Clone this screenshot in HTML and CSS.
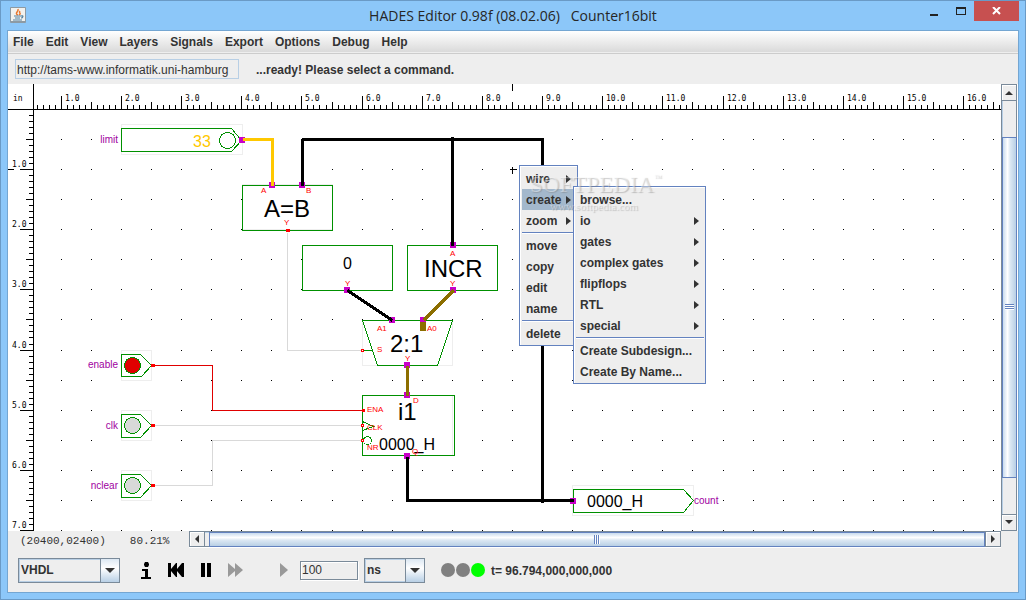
FILE: index.html
```html
<!DOCTYPE html>
<html lang="en">
<head>
  <meta charset="UTF-8" />
  <meta name="viewport" content="width=device-width, initial-scale=1.0"/>
  <title>HADES Editor</title>
  <link rel="stylesheet" href="styles.css">
</head>
<body>

<div class="window">

  <header class="titlebar">
    <svg class="app-icon" width="16" height="16" viewBox="0 0 16 16">
      <rect x="0" y="0" width="16" height="16" rx="1" fill="#8d9aa3"/>
      <rect x="1" y="1" width="14" height="13" fill="#f1f1ee"/>
      <path d="M8 8C4 6 9 5 8 2M9 8c3-2-1-2 1-4" fill="none" stroke="#e8772e" stroke-width="1.5"/>
      <path d="M4 9h7M5 11h5M3 13h9M11 9c3-1 2 2 0 2" fill="none" stroke="#5382a1" stroke-width="1.2"/>
    </svg>
    <h1>HADES Editor 0.98f (08.02.06)   Counter16bit</h1>
    <div class="window-buttons">
      <button class="win-btn" aria-label="Minimize"><svg width="11" height="9"><rect x="2" y="7" width="8" height="2" fill="#222"/></svg></button>
      <button class="win-btn" aria-label="Maximize"><svg width="11" height="9"><path d="M1 0h10v8H1zM2 2v5h8V2z" fill="#222" fill-rule="evenodd"/></svg></button>
      <button class="win-btn close" aria-label="Close"><svg width="9" height="8"><path d="M1 0l7 7M8 0l-7 7" stroke="#fff" stroke-width="2"/></svg></button>
    </div>
  </header>

  <div class="client">

    <nav class="menubar">
      <button>File</button>
      <button>Edit</button>
      <button>View</button>
      <button>Layers</button>
      <button>Signals</button>
      <button>Export</button>
      <button>Options</button>
      <button>Debug</button>
      <button>Help</button>
    </nav>

    <div class="toolbar">
      <input class="url" type="text" aria-label="Design URL" value="http://tams-www.informatik.uni-hamburg" readonly>
      <span class="message">...ready! Please select a command.</span>
    </div>

    <main class="editor">
      <div class="canvas">
        <svg class="schematic" width="100%" height="100%">
          <g id="grid" class="crisp"></g>

          <!-- page coordinates, shifted to the canvas origin -->
          <g transform="translate(-7.5 -83.5)">

            <!-- bounding boxes -->
            <g class="bbox crisp">
              <rect x="121" y="124" width="121" height="30"/>
              <rect x="121" y="350" width="30" height="30"/>
              <rect x="121" y="410" width="30" height="30"/>
              <rect x="121" y="470" width="30" height="30"/>
              <rect x="242" y="184" width="90" height="45"/>
              <rect x="302" y="245" width="90" height="45"/>
              <rect x="407" y="245" width="90" height="45"/>
              <rect x="362" y="320" width="90" height="45"/>
              <rect x="362" y="395" width="90" height="60"/>
              <rect x="572" y="485" width="121" height="30"/>
            </g>

            <!-- component outlines -->
            <g class="outline crisp">
              <path d="M231 128H121V151H231L241 140Z"/>
              <circle cx="227" cy="140" r="8"/>
              <rect x="242" y="185" width="90" height="45"/>
              <rect x="302" y="245" width="90" height="45"/>
              <rect x="407" y="245" width="90" height="45"/>
              <path d="M362 320H452L437 365H377Z"/>
              <path d="M363 350H372"/>
              <rect x="362" y="395" width="92" height="60"/>
              <path d="M362 421L373 426L362 430"/>
              <circle cx="367" cy="440" r="4"/>
              <path d="M121 354H140L151 365L141 376H121Z"/>
              <path d="M121 414H140L151 425L140 437H121Z"/>
              <path d="M121 474H140L151 485L140 497H121Z"/>
              <circle cx="132" cy="365" r="8" fill="#e00000"/>
              <circle cx="132" cy="425" r="8" fill="#d9d9d9"/>
              <circle cx="132" cy="485" r="8" fill="#d9d9d9"/>
              <path d="M573 489H683L693 500L683 512H573Z"/>
            </g>
          </g>

          <!-- magenta bus pins -->
          <g class="pin crisp" transform="translate(-8 -84)">
            <path d="M242 137v6M272 182v6M302 182v6M347 287v6M453 242v6M453 287v6M392 317v6M423 317v6M407 362v6M407 392v6M407 453v6M573 498v6"/>
          </g>

          <g transform="translate(-7.5 -83.5)">
            <!-- wires -->
            <g class="wire crisp">
              <path class="low" d="M287 232V350H361M153 425H361M153 485H212V440H361"/>
              <path class="high" d="M153 365H212V410H361"/>
              <path class="bus yellow" d="M242 139H272V185"/>
              <path class="bus" d="M302 185V138M301 139H542V500M452 139V245M407 456V501M406 500H573"/>
              <path class="bus" d="M347 290L392 320"/>
              <path class="bus brown" d="M453 290L423 320M407 365V395"/>
              <circle cx="452" cy="139" r="2"/>
              <circle cx="542" cy="500" r="2"/>
            </g>

            <!-- signal pins -->
            <g class="port crisp">
              <path d="M285 230h4M150 365h4M150 425h4M150 485h4M361 410h3"/>
              <path class="open" d="M361 349h2v2h-2zM361 424h2v2h-2zM361 439h2v2h-2z"/>
            </g>

            <path class="cursor crisp" d="M509 169h7M512 166v7M512 83v7M7 169h6"/>
          </g>

          <rect class="stub crisp" x="412" y="238" width="6" height="9"/>

          <g transform="translate(-8 -84)">
            <g class="type">
              <text x="264" y="217">A=B</text>
              <text x="424" y="277">INCR</text>
              <text x="390" y="352">2:1</text>
              <text x="398" y="420">i1</text>
            </g>
            <g class="value">
              <text class="yellow" x="193" y="147">33</text>
              <text x="343" y="269">0</text>
              <text x="379" y="450">0000_H</text>
              <text x="587" y="507">0000_H</text>
            </g>
            <g class="label">
              <text x="118" y="143">limit</text>
              <text x="118" y="368">enable</text>
              <text x="118" y="429">clk</text>
              <text x="118" y="489">nclear</text>
              <text class="start" x="694" y="504">count</text>
            </g>
            <g class="port-name">
              <text x="261" y="193">A</text>
              <text x="306" y="193">B</text>
              <text x="284" y="225">Y</text>
              <text x="345" y="286">Y</text>
              <text x="450" y="256">A</text>
              <text x="450" y="286">Y</text>
              <text x="377" y="331">A1</text>
              <text x="427" y="331">A0</text>
              <text x="377" y="352">S</text>
              <text x="405" y="361">Y</text>
              <text x="413" y="403">D</text>
              <text x="367" y="412">ENA</text>
              <text x="367" y="430">CLK</text>
              <text x="367" y="450">NR</text>
              <text x="412" y="454">Q</text>
            </g>
          </g>

          <g id="rulers" class="crisp"></g>
        </svg>

        <div class="popup context">
          <button class="sub">wire</button>
          <button class="sub active">create</button>
          <button class="sub">zoom</button>
          <hr>
          <button>move</button>
          <button>copy</button>
          <button>edit</button>
          <button>name</button>
          <hr>
          <button>delete</button>
        </div>

        <div class="popup create">
          <button>browse...</button>
          <button class="sub">io</button>
          <button class="sub">gates</button>
          <button class="sub">complex gates</button>
          <button class="sub">flipflops</button>
          <button class="sub">RTL</button>
          <button class="sub">special</button>
          <hr>
          <button>Create Subdesign...</button>
          <button>Create By Name...</button>
        </div>

        <div class="watermark">
          <div class="brand">SOFTPEDIA<sup>™</sup></div>
          <div class="site">www.softpedia.com</div>
        </div>
      </div>

      <div class="scrollbar vertical">
        <button class="arrow up" aria-label="Scroll up"></button>
        <div class="track"></div>
        <div class="thumb"><span class="grip"></span></div>
        <div class="track"></div>
        <button class="arrow down" aria-label="Scroll down"></button>
      </div>
    </main>

    <div class="statusbar">
      <div class="info"><span>(20400,02400)</span><span>80.21%</span></div>
      <div class="scrollbar horizontal">
        <button class="arrow left" aria-label="Scroll left"></button>
        <div class="track"></div>
        <div class="thumb"><span class="grip"></span></div>
        <button class="arrow right" aria-label="Scroll right"></button>
      </div>
    </div>

    <footer class="simbar">
      <div class="combo language">
        <select aria-label="Language"><option>VHDL</option></select>
        <span class="drop"></span>
      </div>
      <div class="controls">
        <button aria-label="Info"><svg width="10" height="17"><path d="M3 2l1-2h3l1 2v1L7 5H4L3 3zM1 7h6v8h3v2H0v-2h4V9H1z" fill="#000"/></svg></button>
        <button aria-label="Rewind"><svg width="16" height="14"><path d="M0 0h3v6l5-6h1v6l5-6h2v14h-2L9 8v6H8L3 8v6H0z" fill="#000"/></svg></button>
        <button aria-label="Pause"><svg width="10" height="14"><path d="M0 0h4v14H0zM6 0h4v14H6z" fill="#000"/></svg></button>
        <button aria-label="Fast forward"><svg width="15" height="14"><path d="M0 0l7 6V0l8 7-8 7V8l-7 6z" fill="#999"/></svg></button>
        <button class="step" aria-label="Step"><svg width="8" height="14"><path d="M0 0l8 7-8 7z" fill="#999"/></svg></button>
      </div>
      <input class="amount" type="text" aria-label="Step time" value="100">
      <div class="combo unit">
        <select aria-label="Time unit"><option>ns</option></select>
        <span class="drop"></span>
      </div>
      <div class="leds"><i></i><i></i><i class="on"></i></div>
      <span class="time">t= 96.794,000,000,000</span>
    </footer>

  </div>
</div>

<script src="rulers.js"></script>
</body>
</html>
```
FILE: styles.css
```css
* {
  box-sizing: border-box;
}

body {
  margin: 0;
  font-family: "Liberation Sans", Arial, sans-serif;
  font-size: 12px;
  color: #333;
}

button, input, select {
  font: inherit;
  color: inherit;
  margin: 0;
  padding: 0;
  border: none;
  background: none;
  border-radius: 0;
}

.window {
  display: flex;
  flex-direction: column;
  height: 100vh;
  padding: 0 6px 6px;
  border: 1px solid #6a9ac6;
  background: #8cc7f9;
}

/* Title bar */
.titlebar {
  display: grid;
  grid-template-columns: 1fr auto 1fr;
  height: 29px;
  flex: none;
}

.app-icon {
  margin: 6px 0 0 3px;
}

.titlebar h1 {
  margin: 0;
  font: 14px/29px "Open Sans", "Segoe UI", sans-serif;
  color: #262626;
  white-space: pre;
}

.window-buttons {
  display: flex;
  justify-content: flex-end;
  height: 20px;
}

.win-btn {
  display: flex;
  align-items: center;
  justify-content: center;
  width: 27px;
}

.win-btn.close {
  width: 45px;
  background: #c75050;
}

.client {
  flex: 1;
  display: flex;
  flex-direction: column;
  min-height: 0;
  border: 1px solid #74a6d2;
  background: #eee;
}

/* Menu bar */
.menubar {
  display: flex;
  gap: 12px;
  height: 23px;
  padding: 0 5px 1px;
  flex: none;
  border-bottom: 1px solid #ccc;
  background: linear-gradient(#fff, #dadada 95%, #eee 96%);
}

.menubar button,
.message,
.popup button,
.time {
  font-weight: bold;
}

/* Toolbar */
.toolbar {
  display: flex;
  align-items: center;
  gap: 17px;
  height: 30px;
  padding: 0 7px;
  flex: none;
}

.url {
  width: 224px;
  height: 20px;
  padding: 1px 1px 0;
  border: 1px solid #b8cfe5;
}

.message {
  padding-top: 2px;
}

/* Editor */
.editor {
  flex: 1;
  display: flex;
  min-height: 0;
}

.canvas {
  position: relative;
  flex: 1;
  min-width: 0;
  overflow: hidden;
  background: #fff;
}

.schematic {
  display: block;
}

.crisp {
  shape-rendering: crispEdges;
}

.tick, .cursor {
  fill: none;
  stroke: #000;
}

.dot {
  fill: #000;
}

.ruler-label {
  font: 8px "DejaVu Sans Mono", monospace;
  fill: #000;
}

.bbox * {
  fill: #fff;
  stroke: #eee;
}

.outline {
  fill: none;
  stroke: #009000;
}

.pin {
  fill: none;
  stroke: #c800c8;
  stroke-width: 6;
}

.wire path {
  fill: none;
  stroke: #000;
}

.wire .low {
  stroke: #d9d9d9;
}

.wire .high {
  stroke: #e00000;
}

.wire .bus {
  stroke-width: 3;
}

.wire .bus.yellow {
  stroke: #ffc800;
}

.wire .bus.brown {
  stroke: #8c6e00;
}

.stub {
  fill: #8c6e00;
}

.wire circle {
  stroke: #000;
}

.port path {
  fill: none;
  stroke: #f00;
  stroke-width: 3;
}

.port .open {
  fill: #fff;
  stroke-width: 1;
}

.type {
  font-size: 24px;
  fill: #000;
}

.value {
  font-size: 16px;
  fill: #000;
}

.value .yellow {
  fill: #ffc800;
}

.label {
  font-size: 10px;
  fill: #a000a0;
  text-anchor: end;
}

.label .start {
  text-anchor: start;
}

.port-name {
  font-size: 8px;
  fill: #f00;
}

/* Popup menus */
.popup {
  position: absolute;
  padding: 2px 1px 1px 2px;
  border: 1px solid #6382bf;
  background: #eee;
  box-shadow: inset 1px 1px #fff;
}

.popup.context {
  left: 511px;
  top: 81px;
  width: 59px;
}

.popup.create {
  left: 565px;
  top: 102px;
  width: 133px;
}

.popup button {
  display: flex;
  align-items: center;
  justify-content: space-between;
  width: 100%;
  height: 21px;
  padding: 0 5px 0 4px;
  white-space: nowrap;
}

.popup .sub::after {
  content: "";
  border: 4px solid transparent;
  border-left: 5px solid #333;
  border-right: none;
}

.popup .active {
  background: #a3b8cc;
}

.popup hr {
  height: 4px;
  margin: 0;
  border: none;
  background: linear-gradient(#eee 1px, #6382bf 1px, #6382bf 2px, #fff 2px, #fff 3px, #eee 3px);
}

.watermark {
  position: absolute;
  left: 522px;
  top: 88px;
  color: rgba(255, 255, 255, 0.4);
  font-family: "Liberation Serif", serif;
  text-shadow: 1px 1px 1px rgba(120, 120, 120, 0.4);
  pointer-events: none;
}

.brand {
  font-size: 23px;
  line-height: 26px;
}

.brand sup {
  font-size: 8px;
  vertical-align: top;
  line-height: 12px;
}

.site {
  padding-left: 20px;
  font-size: 11px;
  line-height: 16px;
}

/* Scrollbars */
.scrollbar {
  display: flex;
}

.scrollbar.vertical {
  flex-direction: column;
  width: 17px;
  border-left: 1px solid #7a8a99;
  border-right: 1px solid #fff;
}

.scrollbar.horizontal {
  flex: 1;
  height: 17px;
  border-top: 1px solid #7a8a99;
  border-bottom: 1px solid #fff;
}

.arrow {
  display: flex;
  align-items: center;
  justify-content: center;
  flex: none;
  width: 15px;
  height: 15px;
  border: 1px solid #7a8a99;
  box-shadow: inset 1px 1px #fff;
}

.vertical .arrow {
  height: 17px;
  border-left: none;
}

.horizontal .arrow {
  width: 16px;
  border-top: none;
}

.arrow::after {
  content: "";
  border: 4px solid transparent;
}

.arrow.up::after {
  border-top: none;
  border-bottom-color: #333;
}

.arrow.down::after {
  border-bottom: none;
  border-top-color: #333;
}

.arrow.left::after {
  border-left: none;
  border-right-color: #333;
}

.arrow.right::after {
  border-right: none;
  border-left-color: #333;
}

.vertical .track {
  flex: 36;
  border-left: 1px solid #b8cfe5;
  border-right: 1px solid #7a8a99;
}

.horizontal .track {
  width: 4px;
  border-top: 1px solid #b8cfe5;
  border-bottom: 1px solid #7a8a99;
}

.thumb {
  display: flex;
  align-items: center;
  justify-content: center;
  border: 1px solid #6382bf;
}

.vertical .thumb {
  flex: 342;
  background: linear-gradient(90deg, #c8dbee, #fff 35%, #dce8f3 55%, #b8cfe5);
}

.horizontal .thumb {
  flex: 1;
  background: linear-gradient(#c8dbee, #fff 35%, #dce8f3 55%, #b8cfe5);
}

.vertical .grip {
  width: 9px;
  height: 6px;
  background: repeating-linear-gradient(#6382bf 0 1px, #fff 1px 2px);
}

.horizontal .grip {
  width: 6px;
  height: 9px;
  background: repeating-linear-gradient(90deg, #6382bf 0 1px, #fff 1px 2px);
}

/* Status line */
.statusbar {
  display: flex;
  flex: none;
  padding-right: 17px;
}

.info {
  display: flex;
  align-items: center;
  gap: 24px;
  width: 181px;
  padding: 4px 0 0 12px;
  font: 11px/13px "Liberation Mono", monospace;
}

/* Simulation controls */
.simbar {
  display: flex;
  align-items: center;
  height: 44px;
  padding: 0 10px;
  flex: none;
}

.combo {
  display: grid;
  grid-template-columns: 1fr 19px;
  height: 25px;
  border: 1px solid #7a8a99;
}

.combo.language {
  width: 102px;
}

.combo.unit {
  width: 61px;
  margin-left: 6px;
}

.combo select {
  appearance: none;
  grid-area: 1 / 1 / 2 / 3;
  padding-left: 1px;
  border: 1px solid #b8cfe5;
  font-weight: bold;
}

.drop {
  grid-area: 1 / 2;
  display: flex;
  align-items: center;
  justify-content: center;
  border-left: 1px solid #7a8a99;
  background: linear-gradient(#dce8f3, #fff 40%, #b8cfe5);
  pointer-events: none;
}

.drop::after {
  content: "";
  border: 5px solid transparent;
  border-top-color: #333;
  border-bottom: none;
}

.controls {
  display: flex;
  align-items: center;
  gap: 17px;
  padding: 0 12px 0 21px;
}

.controls button {
  display: flex;
}

.controls .step {
  margin-left: 20px;
}

.amount {
  width: 58px;
  height: 19px;
  padding: 0 1px;
  border: 1px solid #7a8a99;
  box-shadow: inset 1px 1px #fff, 1px 1px #fff;
}

.leds {
  display: flex;
  gap: 1px;
  margin: 0 6px 0 16px;
}

.leds i {
  width: 14px;
  height: 14px;
  border-radius: 50%;
  background: #808080;
}

.leds .on {
  background: #0f0;
}

.time {
  padding-top: 2px;
}
```
FILE: rulers.js
```js
// rulers and snap grid, one major unit = 60.16px at 80.21% zoom
const unit = 60.16;
const originX = -6.86;
const originY = 25.39;
const ns = "http://www.w3.org/2000/svg";
const grid = document.getElementById("grid");
const rulers = document.getElementById("rulers");

function add(parent, tag, attrs, text) {
  const el = document.createElementNS(ns, tag);
  for (const key in attrs) el.setAttribute(key, attrs[key]);
  if (text) el.textContent = text;
  parent.appendChild(el);
}

function draw() {
  const svg = document.querySelector(".schematic");
  const width = svg.clientWidth;
  const height = svg.clientHeight;
  let dots = "";
  let ticks = "M0 25.5H" + width + "M25.5 0V" + height;
  grid.innerHTML = "";
  rulers.innerHTML = "";

  for (let i = 2; originX + i * unit / 2 < width; i++) {
    for (let j = 1; originY + j * unit / 2 < height; j++) {
      const x = Math.floor(originX + i * unit / 2);
      const y = Math.floor(originY + j * unit / 2);
      dots += `M${x} ${y}h1v1h-1z`;
    }
  }

  for (let i = 6; originX + i * unit / 10 < width; i++) {
    const x = Math.floor(originX + i * unit / 10);
    const size = i % 10 === 0 ? 13 : i % 5 === 0 ? 7 : 4;
    ticks += `M${x + 0.5} ${25 - size}v${size}`;
    if (i % 10 === 0) {
      add(rulers, "text", { class: "ruler-label", x: x + 4, y: 17 }, (i / 10) + ".0");
    }
  }

  for (let i = 1; originY + i * unit / 10 < height; i++) {
    const y = Math.floor(originY + i * unit / 10);
    const size = i % 10 === 0 ? 13 : i % 5 === 0 ? 7 : 4;
    ticks += `M${25 - size} ${y + 0.5}h${size}`;
    if (i % 10 === 0) {
      add(rulers, "text", { class: "ruler-label", x: 4, y: y - 2 }, (i / 10) + ".0");
    }
  }

  add(rulers, "text", { class: "ruler-label", x: 5, y: 17 }, "in");
  add(grid, "path", { class: "dot", d: dots });
  add(rulers, "path", { class: "tick", d: ticks });
}

window.addEventListener("resize", draw);
draw();
```
